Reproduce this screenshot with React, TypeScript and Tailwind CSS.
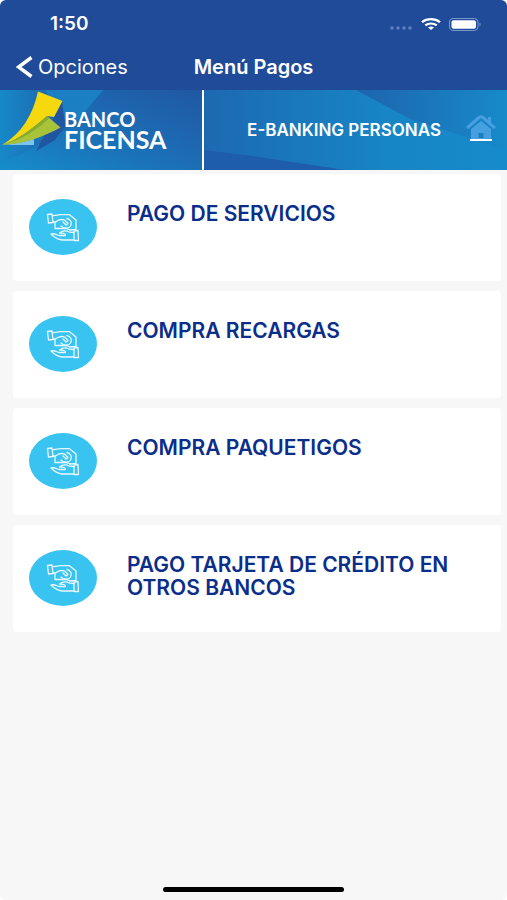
const menu = [
  'PAGO DE SERVICIOS',
  'COMPRA RECARGAS',
  'COMPRA PAQUETIGOS',
  'PAGO TARJETA DE CRÉDITO EN OTROS BANCOS',
];

function PaymentIcon() {
  return (
    <svg
      viewBox="0 0 68 56"
      className="h-14 w-17 shrink-0"
      fill="none"
      stroke="#e9f9ff"
      strokeWidth="1.3"
      strokeLinejoin="round"
      strokeLinecap="round"
      aria-hidden="true"
    >
      <ellipse cx="34" cy="28" rx="34" ry="28" fill="#38c3f0" stroke="none" />
      <path d="M18.500 15.500l4.500-.5 1 8.500-4.500.5z" />
      <path d="M23.500 16.500c3 .5 5-.8 8-.8h9l6.500 5.300v9.500l-6 .5" />
      <path d="M24 23h2v6.500h11" />
      <path d="M26.500 23c3-2.500 6-3 9-2l3.500 3.500-2 1.500-3-3" />
      <path d="M38 19.500c4 1 5.300 4.500 3.500 7.500-2 3-7 3-9.500 0" />
      <path d="M41 31c-2-1-3-1.500-4-1.500" />
      <path d="M22 35c3-1 5 .5 8 1.500h6.500c.5-2-3-2.500-6-2.500 3-2.500 7-2.500 10-.8l4.500.3M44.500 41H33c-4.500-.5-8-3-11-6" />
      <path d="M45 32l4-.5.5 10H45z" />
    </svg>
  );
}

function StatusBar() {
  return (
    <div className="flex h-11 items-center justify-between pt-1 pr-[26px] pl-[50px]">
      <span className="text-[19px] leading-5 font-semibold">1:50</span>
      <div className="flex items-center gap-2">
        <svg viewBox="0 0 24 4" className="mt-2 h-1 w-6" fill="#5c7fbd" aria-hidden="true">
          <circle cx="3" cy="2" r="1.800" />
          <circle cx="9" cy="2" r="1.800" />
          <circle cx="15" cy="2" r="1.800" />
          <circle cx="21" cy="2" r="1.800" />
        </svg>
        <svg viewBox="0 0 20 13" className="h-3 w-5" fill="none" stroke="#ffffff" strokeWidth="2.400" preserveAspectRatio="none" aria-hidden="true">
          <path d="M1 4.600c5-4.400 13-4.400 18 0M4.300 8c3.300-2.700 8.100-2.700 11.400 0" />
          <path d="M7 10.300c1.800-1.300 4.200-1.300 6 0l-3 2.700z" fill="#ffffff" stroke="none" />
        </svg>
        <svg viewBox="0 0 32 13" className="h-[13px] w-8" aria-hidden="true">
          <rect x=".5" y=".5" width="28.500" height="12" rx="3.500" fill="none" stroke="#7b98ca" />
          <rect x="2.500" y="2.300" width="24.500" height="8.400" rx="2" fill="#ffffff" />
          <path d="M30.500 4.500c1.500.6 1.500 3.400 0 4z" fill="#7b98ca" />
        </svg>
      </div>
    </div>
  );
}

function Banner() {
  return (
    <div className="relative flex h-20 items-stretch overflow-hidden bg-[#1a7cc0]">
      <svg viewBox="0 0 507 80" preserveAspectRatio="none" className="absolute inset-0 h-full w-full" aria-hidden="true">
        <defs>
          <linearGradient id="left" x1="0" y1="1" x2="1" y2="0">
            <stop offset="0" stopColor="#168dcc" />
            <stop offset=".4" stopColor="#1b73b9" />
            <stop offset="1" stopColor="#2057a3" />
          </linearGradient>
          <linearGradient id="right" x1="0" y1="0" x2="1" y2="0">
            <stop offset="0" stopColor="#1d69b0" />
            <stop offset=".6" stopColor="#1785c6" />
            <stop offset="1" stopColor="#168bcb" />
          </linearGradient>
          <linearGradient id="wedge" x1="0" y1="0" x2="1" y2="0">
            <stop offset="0" stopColor="#1e64ad" />
            <stop offset="1" stopColor="#178aca" />
          </linearGradient>
          <linearGradient id="corner" x1="0" y1="0" x2="1" y2="0">
            <stop offset="0" stopColor="#1689c8" />
            <stop offset=".6" stopColor="#2062aa" />
            <stop offset="1" stopColor="#1b80c2" />
          </linearGradient>
        </defs>
        <rect width="203" height="80" fill="url(#left)" />
        <path d="M0 0h103L75 34 20 65 0 72z" fill="url(#corner)" />
        <path d="M45 0h58L76 32 62 28z" fill="#1b7fc3" />
        <path d="M62 10L55 26 36 61 55 50 65 36z" fill="#2055a2" />
        <rect x="203" width="304" height="80" fill="url(#right)" />
        <path d="M356 0h151v60L410 29z" fill="url(#wedge)" />
        <path d="M203 60l50 6 92 14H203z" fill="#1e5dab" />
      </svg>
      <div className="relative flex w-[204px] shrink-0 items-center border-r-2 border-white">
        <svg viewBox="0 0 64 58" className="mb-5 h-[58px] w-16 shrink-0" aria-hidden="true">
          <path d="M4 54c10-1 20-3 30-6v6z" fill="#7cc4ec" />
          <path d="M2 54C21 43 33 24 38 .5l24.500 9.500-8.500 16-7-1C33 37 20 48 2 54z" fill="#f6d80e" />
          <path d="M2 54C20 48 34 37 47 25l13.500 11.500C43 46 24 53 2 54z" fill="#a8c338" />
          <path d="M2 54C20 48 34 37 47 25l2.500 2C38 38 22 49 2 54z" fill="#86ab2e" />
        </svg>
        <div className="flex flex-col font-['Lato','Open_Sans',sans-serif] font-bold">
          <span className="text-[20px] leading-[18px]">BANCO</span>
          <span className="text-[25px] leading-[22px]">FICENSA</span>
        </div>
      </div>
      <div className="relative flex flex-1 items-center justify-end gap-6 pr-[10px]">
        <span className="text-[17px] leading-5 font-semibold">E-BANKING PERSONAS</span>
        <button type="button" aria-label="Inicio" className="flex">
          <svg viewBox="0 0 32 30" className="h-[30px] w-8" aria-hidden="true">
            <path d="M6 14L16 6l10 8v11H6z" fill="#469fe1" />
            <path d="M13.500 23v-5h5v5z" fill="#1b80c2" />
            <path d="M2 13L14 2.500q2-1.500 4 0L30 13M24.500 2v6" fill="none" stroke="#469fe1" strokeWidth="3" />
            <path d="M5 25h22" stroke="#ffffff" strokeWidth="2" />
          </svg>
        </button>
      </div>
    </div>
  );
}

export default function App() {
  return (
    <div className="flex min-h-screen flex-col bg-white font-['Inter','Liberation_Sans',sans-serif] text-white">
      <div className="flex flex-1 flex-col overflow-hidden rounded-md bg-[#f7f7f7]">
        <header>
          <div className="h-[90px] bg-[#1f4b99]">
            <StatusBar />
            <div className="grid h-[46px] grid-cols-[1fr_auto_1fr] items-center px-4">
              <button type="button" className="flex items-center gap-1 text-[20px] leading-6">
                <svg viewBox="0 0 18 22" className="h-[22px] w-[18px]" fill="none" stroke="#ffffff" strokeWidth="3.500" aria-hidden="true">
                  <path d="M15.500 1.500L2.500 11l13 9.500" />
                </svg>
                Opciones
              </button>
              <h1 className="text-[20px] leading-6 font-semibold">Menú Pagos</h1>
            </div>
          </div>
          <Banner />
        </header>
        <main className="flex-1 pt-1 pr-[6px] pl-[13px]">
          <ul className="flex flex-col gap-[10px]">
            {menu.map((label) => (
              <li key={label}>
                <button
                  type="button"
                  className="flex min-h-[107px] w-full items-start gap-[30px] rounded-sm bg-white pr-6 pl-4 text-left"
                >
                  <span className="pt-[25px]">
                    <PaymentIcon />
                  </span>
                  <span className="pt-7 text-[21px] leading-[23px] font-semibold text-[#0b2e8a]">{label}</span>
                </button>
              </li>
            ))}
          </ul>
        </main>
        <div className="flex justify-center pb-2">
          <div className="h-[5px] w-[181px] rounded-full bg-black" />
        </div>
      </div>
    </div>
  );
}
